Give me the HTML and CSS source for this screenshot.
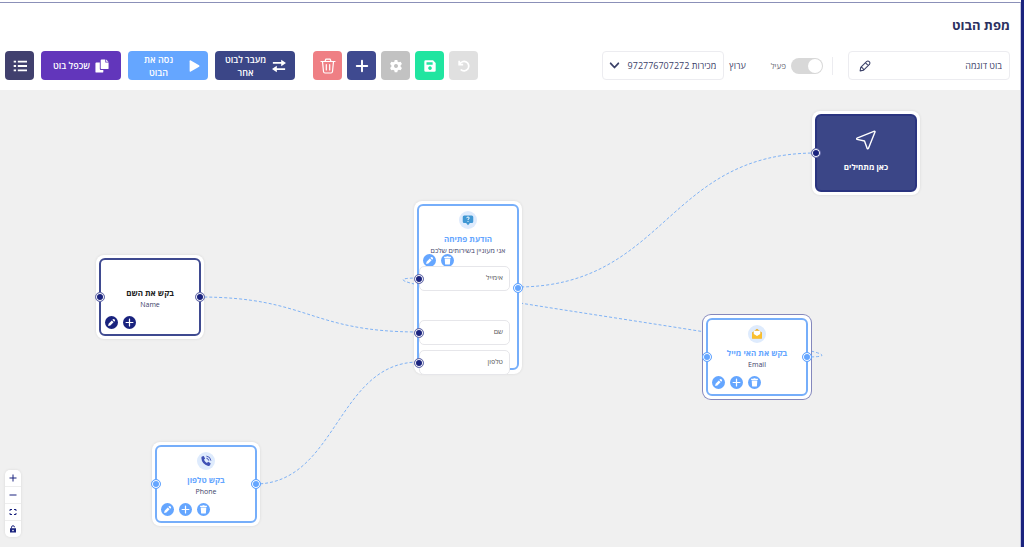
FILE: index.html
```html
<!DOCTYPE html>
<html lang="he" dir="rtl">
<head>
  <meta charset="UTF-8" />
  <meta name="viewport" content="width=device-width, initial-scale=1.0" />
  <title>מפת הבוט</title>
  <link rel="stylesheet" href="styles.css">
</head>
<body>
  <svg class="sprite" aria-hidden="true">
    <symbol id="pencil" viewBox="0 0 16 16"><path d="M2 14l.8-4 5.700-5.700 3.200 3.200L6 13.200zM9.500 3.300l1.300-1.300q1-.8 2 0l1.200 1.200q.8 1 0 2l-1.300 1.300z" fill="currentColor"/></symbol>
    <symbol id="plus" viewBox="0 0 16 16"><path d="M8 2v12M2 8h12" stroke="currentColor" stroke-width="2.2" stroke-linecap="round"/></symbol>
    <symbol id="bin" viewBox="0 0 16 16"><path d="M2 1.500h4l.6-1h2.800l.6 1h4V3.500H2zM3 4.500h10l-.7 9.500q-.1 1-1.100 1H4.800q-1 0-1.100-1z" fill="currentColor"/></symbol>
  </svg>

  <header class="header">
    <h1>מפת הבוט</h1>
    <div class="toolbar">
      <div class="field name-field">
        <input id="bot-name" type="text" value="בוט דוגמה" aria-label="שם הבוט" />
        <svg class="field-icon" viewBox="0 0 16 16" fill="none" stroke="currentColor" stroke-width="1.400" stroke-linejoin="round"><path d="M1.500 14.500l.8-4.700 7.700-7.700q1.900-1.600 3.600 0t.3 3.800L6.200 13.600zM8.500 3.600l3.900 3.900M2.300 9.800q3.400.3 3.900 3.800"/></svg>
      </div>
      <div class="divider"></div>
      <label class="switch">
        <input type="checkbox" />
        <span>פעיל</span>
      </label>
      <label class="channel-label" for="channel">ערוץ</label>
      <div class="field channel-field">
        <select id="channel">
          <option>מכירות 972776707272</option>
        </select>
        <svg class="chevron" viewBox="0 0 10 10" fill="none" stroke="currentColor" stroke-width="1.600" stroke-linecap="round" stroke-linejoin="round"><path d="M1.500 3L5 6.800 8.500 3"/></svg>
      </div>

      <div class="actions">
        <div class="group">
          <button class="btn undo" aria-label="בטל"><svg viewBox="0 0 16 16" fill="none" stroke="currentColor" stroke-width="2"><path d="M2.500 2v4.500H7M3 6.300A5.400 5.400 0 1 1 4.200 12"/></svg></button>
          <button class="btn save" aria-label="שמור"><svg viewBox="0 0 16 16"><path fill="currentColor" fill-rule="evenodd" d="M3 1.500h8.500l3 3V13q0 1.500-1.500 1.500H3Q1.500 14.500 1.500 13V3Q1.500 1.500 3 1.500zM4 3.700v3h7v-3zM8 8.400a2.100 2.100 0 1 0 .01 0z"/></svg></button>
          <button class="btn settings" aria-label="הגדרות"><svg viewBox="0 0 16 16"><path fill="currentColor" fill-rule="evenodd" d="M6.500 1h3l.4 2 1.400.8 2-.7 1.500 2.600-1.500 1.400v1.800l1.500 1.400-1.500 2.600-2-.7-1.400.8-.4 2h-3l-.4-2-1.400-.8-2 .7-1.500-2.600 1.500-1.400V7.100L1.200 5.700l1.500-2.600 2 .7L6.100 3zM8 5.700a2.300 2.300 0 1 0 .01 0z"/></svg></button>
          <button class="btn add" aria-label="הוסף"><svg><use href="#plus"/></svg></button>
          <button class="btn remove" aria-label="מחק"><svg viewBox="0 0 16 16" fill="none" stroke="currentColor" stroke-width="1.200" stroke-linecap="round" stroke-linejoin="round"><path d="M1 3.500h14M5 3.500l.8-2.300h4.400l.8 2.300M2.500 3.500l1 10q.2 1.500 1.500 1.500h6q1.300 0 1.500-1.500l1-10M6.300 6.500v5.500M9.700 6.500v5.500"/></svg></button>
        </div>
        <div class="group wide-group">
          <button class="btn wide switch-bot">
            <svg viewBox="0 0 16 16" fill="none" stroke="currentColor" stroke-width="2"><path d="M1 4.500h11M15 11.500H4"/><path d="M10.500.8L16 4.500l-5.500 3.700zM5.500 7.800L0 11.500l5.500 3.700z" fill="currentColor" stroke="none"/></svg>
            <span>מעבר לבוט אחר</span>
          </button>
          <button class="btn wide try-bot">
            <svg viewBox="0 0 16 16"><path d="M3 2.500q0-1.500 1.400-.8l9.400 5.400q1.200.9 0 1.800l-9.400 5.400Q3 15 3 13.500z" fill="currentColor"/></svg>
            <span>נסה את הבוט</span>
          </button>
          <button class="btn wide copy-bot">
            <svg viewBox="0 0 16 16" fill="currentColor"><path d="M7.500.5h4.300V4h3.700v6.500q0 1-1 1h-7q-1 0-1-1v-9q0-1 1-1zM12.700.6l2.700 2.600h-2.700zM1.500 4h4v7.500q0 1.200 1.200 1.200h2.800v1.800q0 1-1 1h-7q-1 0-1-1V5q0-1 1-1z"/></svg>
            <span>שכפל בוט</span>
          </button>
          <button class="btn list" aria-label="רשימה"><svg viewBox="0 0 16 16" fill="none" stroke="currentColor" stroke-width="2.200"><path d="M5.500 3H16M5.500 8H16M5.500 13H16M.8 3h2.700M.8 8h2.700M.8 13h2.700"/></svg></button>
        </div>
      </div>
    </div>
  </header>

  <main class="canvas">
    <svg class="edges" aria-hidden="true">
      <path d="M816 63C666 63 666 197 517 197"/>
      <path d="M199 207C309 207 309 242 419 242"/>
      <path d="M255 394C337 394 337 272 419 272"/>
      <path d="M806 267C929 267 296 188 419 188"/>
    </svg>

    <section class="node start">
      <div class="card">
        <svg class="plane" viewBox="0 0 20 20" fill="none" stroke="currentColor" stroke-width="1.400" stroke-linejoin="round"><path d="M18.500 1.200L1 8.200q-.8.600 0 1.200l7.500 1.600L11.200 18.500q.7.800 1.200 0L19 2q.1-.8-.5-.8z"/></svg>
        <h2>כאן מתחילים</h2>
      </div>
      <i class="handle left navy"></i>
    </section>

    <section class="node message">
      <div class="card">
        <div class="badge"><svg viewBox="0 0 16 16"><path d="M3 2h10q2 0 2 2v6q0 2-2 2h-2.500L8 15l-2.500-3H3q-2 0-2-2V4q0-2 2-2z" fill="#3f97d3"/><path d="M6.200 5.500Q6.500 4 8 4t1.800 1.400Q9.800 6.300 8 7.200v.9M8 9.300v1.200" fill="none" stroke="#fff" stroke-width="1.300"/></svg></div>
        <h2>הודעת פתיחה</h2>
        <p>אני מעוניין בשירותים שלכם</p>
        <div class="tools">
          <button aria-label="עריכה"><svg><use href="#pencil"/></svg></button>
          <button aria-label="מחיקה"><svg><use href="#bin"/></svg></button>
        </div>
        <ul class="options">
          <li>אימייל<i class="handle left navy"></i></li>
          <li>שם<i class="handle left navy"></i></li>
          <li>טלפון<i class="handle left navy"></i></li>
        </ul>
      </div>
      <i class="handle right"></i>
    </section>

    <section class="node ask-name">
      <div class="card">
        <h2>בקש את השם</h2>
        <p>Name</p>
        <div class="tools">
          <button aria-label="עריכה"><svg><use href="#pencil"/></svg></button>
          <button aria-label="הוספה"><svg><use href="#plus"/></svg></button>
        </div>
      </div>
      <i class="handle left navy"></i>
      <i class="handle right navy"></i>
    </section>

    <section class="node ask-email">
      <div class="card">
        <div class="badge"><svg viewBox="0 0 16 16"><path d="M1.500 6L8 1l6.500 5v8h-13z" fill="#e9a820"/><path d="M3.500 3.500h9V9L8 11.500 3.500 9z" fill="#fff"/><path d="M1.500 6.500L8 10.500l6.500-4V14h-13z" fill="#fbc02d"/></svg></div>
        <h2>בקש את האי מייל</h2>
        <p>Email</p>
        <div class="tools">
          <button aria-label="עריכה"><svg><use href="#pencil"/></svg></button>
          <button aria-label="הוספה"><svg><use href="#plus"/></svg></button>
          <button aria-label="מחיקה"><svg><use href="#bin"/></svg></button>
        </div>
      </div>
      <i class="handle left"></i>
      <i class="handle right"></i>
    </section>

    <section class="node ask-phone">
      <div class="card">
        <div class="badge"><svg viewBox="0 0 16 16" fill="none" stroke="#3f51b5"><path d="M2.500 2l2.500-.8 1.800 3.500-1.500 1.600q1 2.800 3.900 4.200l1.700-1.400 3.300 2-.8 2.600q-1 1-2.500.8Q2.500 12.500 1.800 4q0-1.200.7-2z" fill="#3f51b5" stroke="none"/><path d="M8.500 1.500q5.500.5 6 6M8.500 4.300q2.800.4 3.200 3.200" stroke-width="1.300"/></svg></div>
        <h2>בקש טלפון</h2>
        <p>Phone</p>
        <div class="tools">
          <button aria-label="עריכה"><svg><use href="#pencil"/></svg></button>
          <button aria-label="הוספה"><svg><use href="#plus"/></svg></button>
          <button aria-label="מחיקה"><svg><use href="#bin"/></svg></button>
        </div>
      </div>
      <i class="handle left"></i>
      <i class="handle right"></i>
    </section>

    <div class="zoom-controls">
      <button aria-label="הגדל"><svg viewBox="0 0 16 16"><path d="M8 1v14M1 8h14" stroke="currentColor" stroke-width="2"/></svg></button>
      <button aria-label="הקטן"><svg viewBox="0 0 16 16"><path d="M1 8h14" stroke="currentColor" stroke-width="2"/></svg></button>
      <button aria-label="התאם למסך"><svg viewBox="0 0 16 16" fill="none" stroke="currentColor" stroke-width="2"><path d="M2 6V3h4M10 3h4v3M14 10v3h-4M6 13H2v-3"/></svg></button>
      <button aria-label="נעילה"><svg viewBox="0 0 16 16"><path d="M5 7V4.500a3 3 0 0 1 6 0" fill="none" stroke="currentColor" stroke-width="2"/><path fill="currentColor" fill-rule="evenodd" d="M2 6.500h12V15H2zM8 9.300a1.600 1.600 0 1 0 .01 0z"/></svg></button>
    </div>
  </main>
</body>
</html>
```

FILE: styles.css
```css
* {
  box-sizing: border-box;
}
body {
  margin: 0;
  min-height: 100vh;
  display: flex;
  flex-direction: column;
  padding-top: 2px;
  border-right: 3px solid #1a237e;
  background: #fff;
  color: #3b4168;
  font-family: "Open Sans", "Noto Sans", sans-serif;
  font-size: 9px;
}
button, input, select {
  font: inherit;
  color: inherit;
}
button {
  display: flex;
  align-items: center;
  justify-content: center;
  padding: 0;
  border: none;
  cursor: pointer;
}
.sprite {
  position: absolute;
  width: 0;
  height: 0;
}

/* header */
.header {
  border-top: 1px solid #8b90b8;
  border-right: 1px solid #c5c8e0;
  padding: 13px 10px 10px 5px;
}
h1 {
  margin: 0 0 17px;
  font-size: 13px;
  line-height: 18px;
  color: #2b3060;
}
.toolbar {
  display: flex;
  align-items: center;
}
.field {
  position: relative;
  height: 29px;
}
.field input, .field select {
  width: 100%;
  height: 100%;
  padding: 0 7px;
  border: 1px solid #ececf0;
  border-radius: 4px;
  background: #fff;
  appearance: none;
}
.name-field {
  width: 162px;
}
.channel-field {
  width: 122px;
}
.field-icon {
  position: absolute;
  left: 11px;
  top: 9px;
  width: 12px;
  height: 12px;
}
.chevron {
  position: absolute;
  left: 7px;
  top: 9px;
  width: 11px;
  height: 11px;
}
.divider {
  width: 1px;
  height: 18px;
  margin: 0 15px 0 9px;
  background: #ececf0;
}
.switch {
  display: flex;
  align-items: center;
  gap: 5px;
  font-size: 8px;
  color: #6b6b75;
}
.switch input {
  appearance: none;
  width: 32px;
  height: 16px;
  margin: 0;
  padding: 1px;
  border-radius: 8px;
  background: #d8d8d8;
}
.switch input::before {
  content: "";
  display: block;
  width: 14px;
  height: 14px;
  border-radius: 50%;
  background: #fff;
}
.channel-label {
  margin: 0 25px 0 5px;
}

/* toolbar buttons */
.actions {
  display: flex;
  gap: 18px;
  margin-right: auto;
}
.group {
  display: flex;
  gap: 5px;
}
.wide-group {
  gap: 7px;
}
.btn {
  width: 29px;
  height: 29px;
  border-radius: 4px;
  color: #fff;
}
.btn svg {
  width: 14px;
  height: 14px;
  flex: none;
}
.remove svg {
  width: 16px;
  height: 16px;
}
.wide {
  width: 80px;
  padding: 0 9px;
  gap: 5px;
  font-weight: 600;
  line-height: 13px;
}
.try-bot {
  padding: 0 7px;
}
.try-bot span {
  width: 48px;
}
.undo { background: #e0e0e0; }
.save { background: #20e5a0; }
.settings { background: #c2c2c2; }
.add { background: #3f4a90; }
.remove { background: #ef7f84; }
.switch-bot { background: #3b4687; }
.try-bot { background: #65a6ff; }
.copy-bot { background: #6236bb; }
.list { background: #41406e; }

/* flow canvas */
.canvas {
  position: relative;
  flex: 1;
  overflow: hidden;
  background: #f0f0f0;
  border-right: 1px solid #c5c8e0;
}
.edges {
  position: absolute;
  left: 0;
  top: 0;
  width: 100%;
  height: 100%;
  fill: none;
  stroke: #7fb2f5;
  stroke-width: 1;
  stroke-dasharray: 3 2;
}
.node {
  position: absolute;
  width: 108px;
  height: 84px;
  padding: 3px;
  border-radius: 8px;
  background: #fff;
  box-shadow: 0 0 3px rgba(0, 0, 0, 0.1);
}
.start { left: 812px; top: 21px; }
.message { left: 414px; top: 111px; height: 173px; }
.ask-name { left: 96px; top: 165px; }
.ask-email { left: 703px; top: 225px; box-shadow: 0 0 0 1px #8488bd; }
.ask-phone { left: 152px; top: 352px; }

.card {
  display: flex;
  flex-direction: column;
  align-items: center;
  width: 102px;
  height: 100%;
  padding-top: 5px;
  border: 2px solid #76aefa;
  border-radius: 6px;
}
.message .card {
  height: 166px;
}
.ask-name .card {
  padding-top: 27px;
  border-color: #3f4a90;
}
.start .card {
  padding-top: 14px;
  background: #3b4687;
  border-color: #2a347f;
}
.plane {
  width: 20px;
  height: 20px;
  margin-bottom: 11px;
  color: #fff;
}
.badge {
  display: flex;
  flex: none;
  align-items: center;
  justify-content: center;
  width: 18px;
  height: 18px;
  margin-bottom: 4px;
  border-radius: 50%;
  background: #deebfd;
}
.badge svg {
  width: 12px;
  height: 12px;
}
.node h2 {
  margin: 0;
  font-size: 8px;
  line-height: 12px;
  color: #65a6ff;
}
.ask-name h2 { color: #222; }
.start h2 { color: #fff; }
.node p {
  margin: 0;
  font-size: 7px;
  line-height: 12px;
}
.tools {
  direction: ltr;
  display: flex;
  align-self: stretch;
  gap: 5px;
  margin-top: 5px;
  padding-left: 4px;
}
.message .tools {
  margin-top: -3px;
}
.tools button {
  width: 13px;
  height: 13px;
  border-radius: 50%;
  background: #65a6ff;
  color: #fff;
}
.ask-name .tools button {
  background: #1a237e;
}
.tools svg {
  width: 9px;
  height: 9px;
}
.options {
  position: relative;
  align-self: flex-end;
  width: 91px;
  margin: -1px 0 0;
  padding: 0;
  list-style: none;
}
.options li {
  position: relative;
  height: 25px;
  margin-bottom: 5px;
  padding: 0 6px;
  border: 1px solid #e6e6ea;
  border-radius: 5px;
  background: #fff;
  font-size: 7px;
  line-height: 22px;
  color: #555;
}
.options li:first-child {
  margin-bottom: 29px;
}
.handle {
  position: absolute;
  top: calc(50% - 5px);
  width: 10px;
  height: 10px;
  border: 1px solid #65a6ff;
  border-radius: 50%;
  background: #65a6ff;
  box-shadow: inset 0 0 0 1px #fff;
}
.handle.navy {
  background: #1a237e;
  border-color: #6f75b0;
}
.handle.left { left: -1px; }
.handle.right { right: -1px; }
.options .handle.left { left: -6px; }

/* zoom controls */
.zoom-controls {
  position: absolute;
  left: 5px;
  bottom: 10px;
  display: flex;
  flex-direction: column;
  gap: 1px;
  border-radius: 5px;
  overflow: hidden;
  background: #eee;
  box-shadow: 0 0 3px rgba(0, 0, 0, 0.1);
}
.zoom-controls button {
  width: 16px;
  height: 16px;
  background: #fff;
  color: #1a237e;
}
.zoom-controls svg {
  width: 8px;
  height: 8px;
}
```
